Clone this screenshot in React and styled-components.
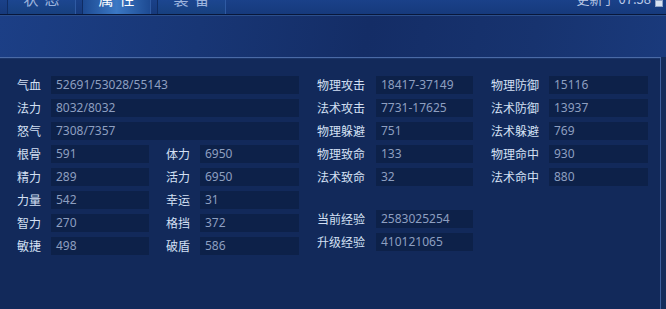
import React from "react";
import styled, { createGlobalStyle } from "styled-components";

const Global = createGlobalStyle`
  html, body { margin: 0; padding: 0; background: #102a58; }
  * { box-sizing: border-box; }
`;

const Frame = styled.div`
  width: 666px;
  height: 309px;
  overflow: hidden;
  display: flex;
  flex-direction: column;
  background: #132c5b;
  font-family: "Noto Sans CJK SC", "Noto Sans", sans-serif;
`;

const TabBar = styled.div`
  height: 15px;
  flex: none;
  display: flex;
  align-items: stretch;
  padding-left: 7px;
  background: linear-gradient(180deg, #1a4189 0%, #163a7c 100%);
  border-bottom: 1px solid #08173a;
  overflow: hidden;
  position: relative;
`;

const Tab = styled.div`
  width: 69px;
  margin-right: 6px;
  display: flex;
  justify-content: center;
  border-left: 1px solid #0f2c63;
  border-right: 1px solid #2f5aa3;
  background: ${(p) =>
    p.$active
      ? "linear-gradient(90deg, #1d4a92 0%, #3b78c4 50%, #1d4a92 100%)"
      : "linear-gradient(180deg, #1c4690 0%, #17407f 100%)"};
  color: ${(p) => (p.$active ? "#ffffff" : "#9db4de")};
  font-size: 15px;
  line-height: 15px;
  letter-spacing: 6px;
`;

const TabText = styled.span`
  margin-top: -9px;
  padding-left: 6px;
`;

const Updated = styled.div`
  margin-left: auto;
  display: flex;
  align-items: flex-start;
  gap: 4px;
  color: #b9c8e6;
  font-size: 13px;
  line-height: 15px;
  padding-right: 3px;
`;

const UpdatedText = styled.span`
  margin-top: -9px;
`;

const Box = styled.span`
  width: 8px;
  height: 7px;
  background: #d8e2f2;
  border: 1px solid #8fa3c8;
`;

const Header = styled.div`
  height: 42px;
  flex: none;
  background: linear-gradient(
    100deg,
    #1c3f86 0%,
    #183675 30%,
    #142d66 55%,
    #17336f 80%,
    #1a3a7c 100%
  );
  border-top: 1px solid #2c4f8c;
`;

const Panel = styled.div`
  flex: 1;
  display: flex;
  gap: 18px;
  padding: 18px 0 0 17px;
  border-top: 1px solid #4a6aa6;
  margin: 0 5px 0 0;
  border-right: 1px solid #3d5f9c;
  background: #12295a;
  box-shadow: inset 0 1px 0 #1a3468;
`;

const Grid = styled.div`
  display: grid;
  grid-template-columns: ${(p) => p.$cols};
  grid-auto-rows: 18px;
  row-gap: 5px;
  align-content: start;
`;

const Column = styled.div`
  display: flex;
  flex-direction: column;
`;

const Spacer = styled.div`
  height: ${(p) => p.$h}px;
`;

const Label = styled.div`
  color: #d4e0f4;
  font-size: 12px;
  line-height: 18px;
  white-space: nowrap;
  grid-column: ${(p) => p.$col || "auto"};
`;

const Value = styled.div`
  background: #0d2149;
  color: #8e9fc0;
  font-family: "Noto Sans", sans-serif;
  font-size: 12px;
  line-height: 18px;
  padding-left: 5px;
  grid-column: ${(p) => p.$span || "auto"};
  white-space: nowrap;
`;

const Gap = styled.div``;

const leftCols = "34px 98px 17px 34px 99px";
const rightCols = "59px 97px 18px 58px 99px";

const wide = [
  ["气血", "52691/53028/55143"],
  ["法力", "8032/8032"],
  ["怒气", "7308/7357"],
];
const pairsLeft = [
  ["根骨", "591", "体力", "6950"],
  ["精力", "289", "活力", "6950"],
  ["力量", "542", "幸运", "31"],
  ["智力", "270", "格挡", "372"],
  ["敏捷", "498", "破盾", "586"],
];
const pairsRight = [
  ["物理攻击", "18417-37149", "物理防御", "15116"],
  ["法术攻击", "7731-17625", "法术防御", "13937"],
  ["物理躲避", "751", "法术躲避", "769"],
  ["物理致命", "133", "物理命中", "930"],
  ["法术致命", "32", "法术命中", "880"],
];
const exp = [
  ["当前经验", "2583025254"],
  ["升级经验", "410121065"],
];

export default function App() {
  return (
    <>
      <Global />
      <Frame>
        <TabBar>
          <Tab><TabText>状态</TabText></Tab>
          <Tab $active><TabText>属性</TabText></Tab>
          <Tab><TabText>装备</TabText></Tab>
          <Updated>
            <UpdatedText>更新于 07:58</UpdatedText>
            <Box />
          </Updated>
        </TabBar>
        <Header />
        <Panel>
          <Grid $cols={leftCols}>
            {wide.map(([l, v]) => (
              <React.Fragment key={l}>
                <Label>{l}</Label>
                <Value $span="2 / 6">{v}</Value>
              </React.Fragment>
            ))}
            {pairsLeft.map(([a, av, b, bv]) => (
              <React.Fragment key={a}>
                <Label>{a}</Label>
                <Value>{av}</Value>
                <Gap />
                <Label>{b}</Label>
                <Value>{bv}</Value>
              </React.Fragment>
            ))}
          </Grid>
          <Column>
            <Grid $cols={rightCols}>
              {pairsRight.map(([a, av, b, bv]) => (
                <React.Fragment key={a}>
                  <Label>{a}</Label>
                  <Value>{av}</Value>
                  <Gap />
                  <Label>{b}</Label>
                  <Value>{bv}</Value>
                </React.Fragment>
              ))}
            </Grid>
            <Spacer $h={24} />
            <Grid $cols="59px 97px">
              {exp.map(([l, v]) => (
                <React.Fragment key={l}>
                  <Label>{l}</Label>
                  <Value>{v}</Value>
                </React.Fragment>
              ))}
            </Grid>
          </Column>
        </Panel>
      </Frame>
    </>
  );
}
